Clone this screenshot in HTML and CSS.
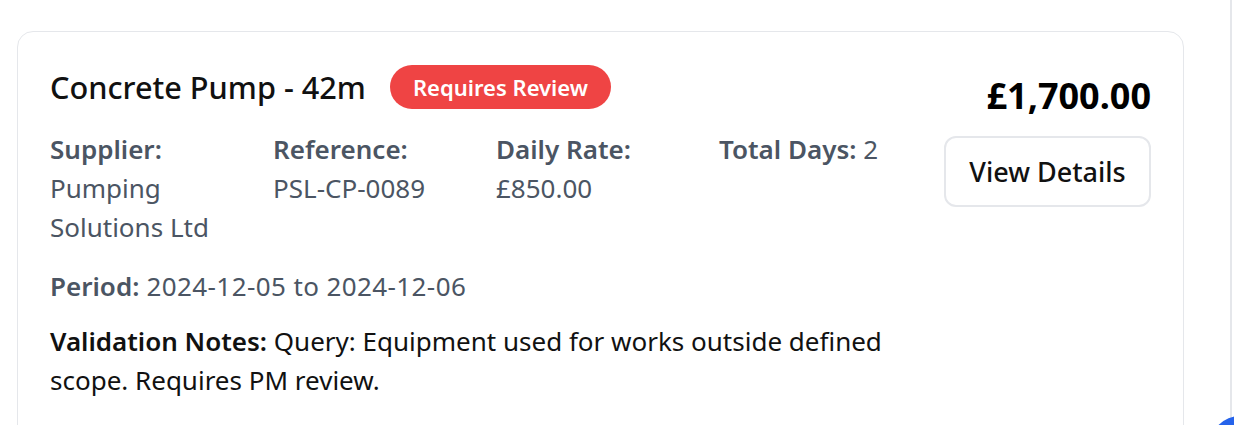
FILE: index.html
```html
<!DOCTYPE html>
<html>
<head>
<meta charset="utf-8">
<link rel="stylesheet" href="styles.css">
</head>
<body>
<div class="page">
  <div class="card">
    <div class="main">
      <div class="title-row">
        <h2 class="title">Concrete Pump - 42m</h2>
        <span class="badge">Requires Review</span>
      </div>
      <div class="grid">
        <div class="cell"><span class="label">Supplier:</span> Pumping Solutions Ltd</div>
        <div class="cell"><span class="label">Reference:</span> <span class="nowrap">PSL-CP-0089</span></div>
        <div class="cell"><span class="label">Daily Rate:</span> £850.00</div>
        <div class="cell"><span class="label">Total Days:</span> 2</div>
      </div>
      <p class="period"><span class="label">Period:</span> 2024-12-05 to 2024-12-06</p>
      <p class="notes"><strong>Validation Notes:</strong> Query: Equipment used for works outside defined scope. Requires PM review.</p>
    </div>
    <div class="side">
      <div class="price">£1,700.00</div>
      <button class="btn">View Details</button>
    </div>
  </div>
</div>
<div class="rail"></div>
<div class="fab"></div>
</body>
</html>
```
FILE: styles.css
```css
* { box-sizing: border-box; }
html, body { margin: 0; padding: 0; background: #fff; overflow: hidden; }
body {
  font-family: "Noto Sans", "Open Sans", sans-serif;
  color: #111;
  height: 425px;
}
.page { padding: 31px 0 0 17px; width: 1184px; }
.card {
  border: 1px solid #e5e7eb;
  border-radius: 16px;
  padding: 32px;
  display: flex;
  min-height: 460px;
  background: #fff;
}
.main { flex: 1; min-width: 0; }
.title-row { display: flex; align-items: center; gap: 24px; height: 46px; }
.title { margin: 0; font-size: 30.7px; font-weight: 500; color: #111; }
.badge {
  background: #ef4444;
  color: #fff;
  font-size: 22px;
  font-weight: 600;
  border-radius: 999px;
  padding: 0 23px;
  height: 44px;
  display: inline-flex;
  align-items: center;
}
.grid {
  display: grid;
  grid-template-columns: repeat(4, 223px);
  margin-top: 20px;
  font-size: 26px;
  line-height: 39px;
  color: #4b5563;
}
.cell { padding-right: 20px; }
.nowrap { white-space: nowrap; }
.label { font-weight: 600; color: #4b5563; }
.period { margin: 20px 0 0; font-size: 26px; line-height: 39px; color: #4b5563; letter-spacing: 0.4px; }
.period .label { letter-spacing: 0; }
.notes { margin: 16px 0 0; font-size: 26px; line-height: 39px; color: #111; padding-right: 8px; }
.notes strong { font-weight: 600; }
.side { width: 207px; display: flex; flex-direction: column; align-items: flex-end; }
.price { font-size: 36px; font-weight: 700; line-height: 44px; margin-top: 10px; color: #000; white-space: nowrap; }
.btn {
  margin-top: 18px;
  width: 207px;
  height: 71px;
  border: 2px solid #e5e7eb;
  border-radius: 12px;
  background: #fff;
  font-family: inherit;
  font-size: 27px;
  font-weight: 500;
  color: #111;
}
.rail { position: fixed; top: 0; left: 1230px; width: 4px; height: 425px; border-left: 2px solid #e5e7eb; }
.fab { position: fixed; left: 1210px; top: 416px; width: 60px; height: 60px; border-radius: 50%; background: #2563eb; }
```
